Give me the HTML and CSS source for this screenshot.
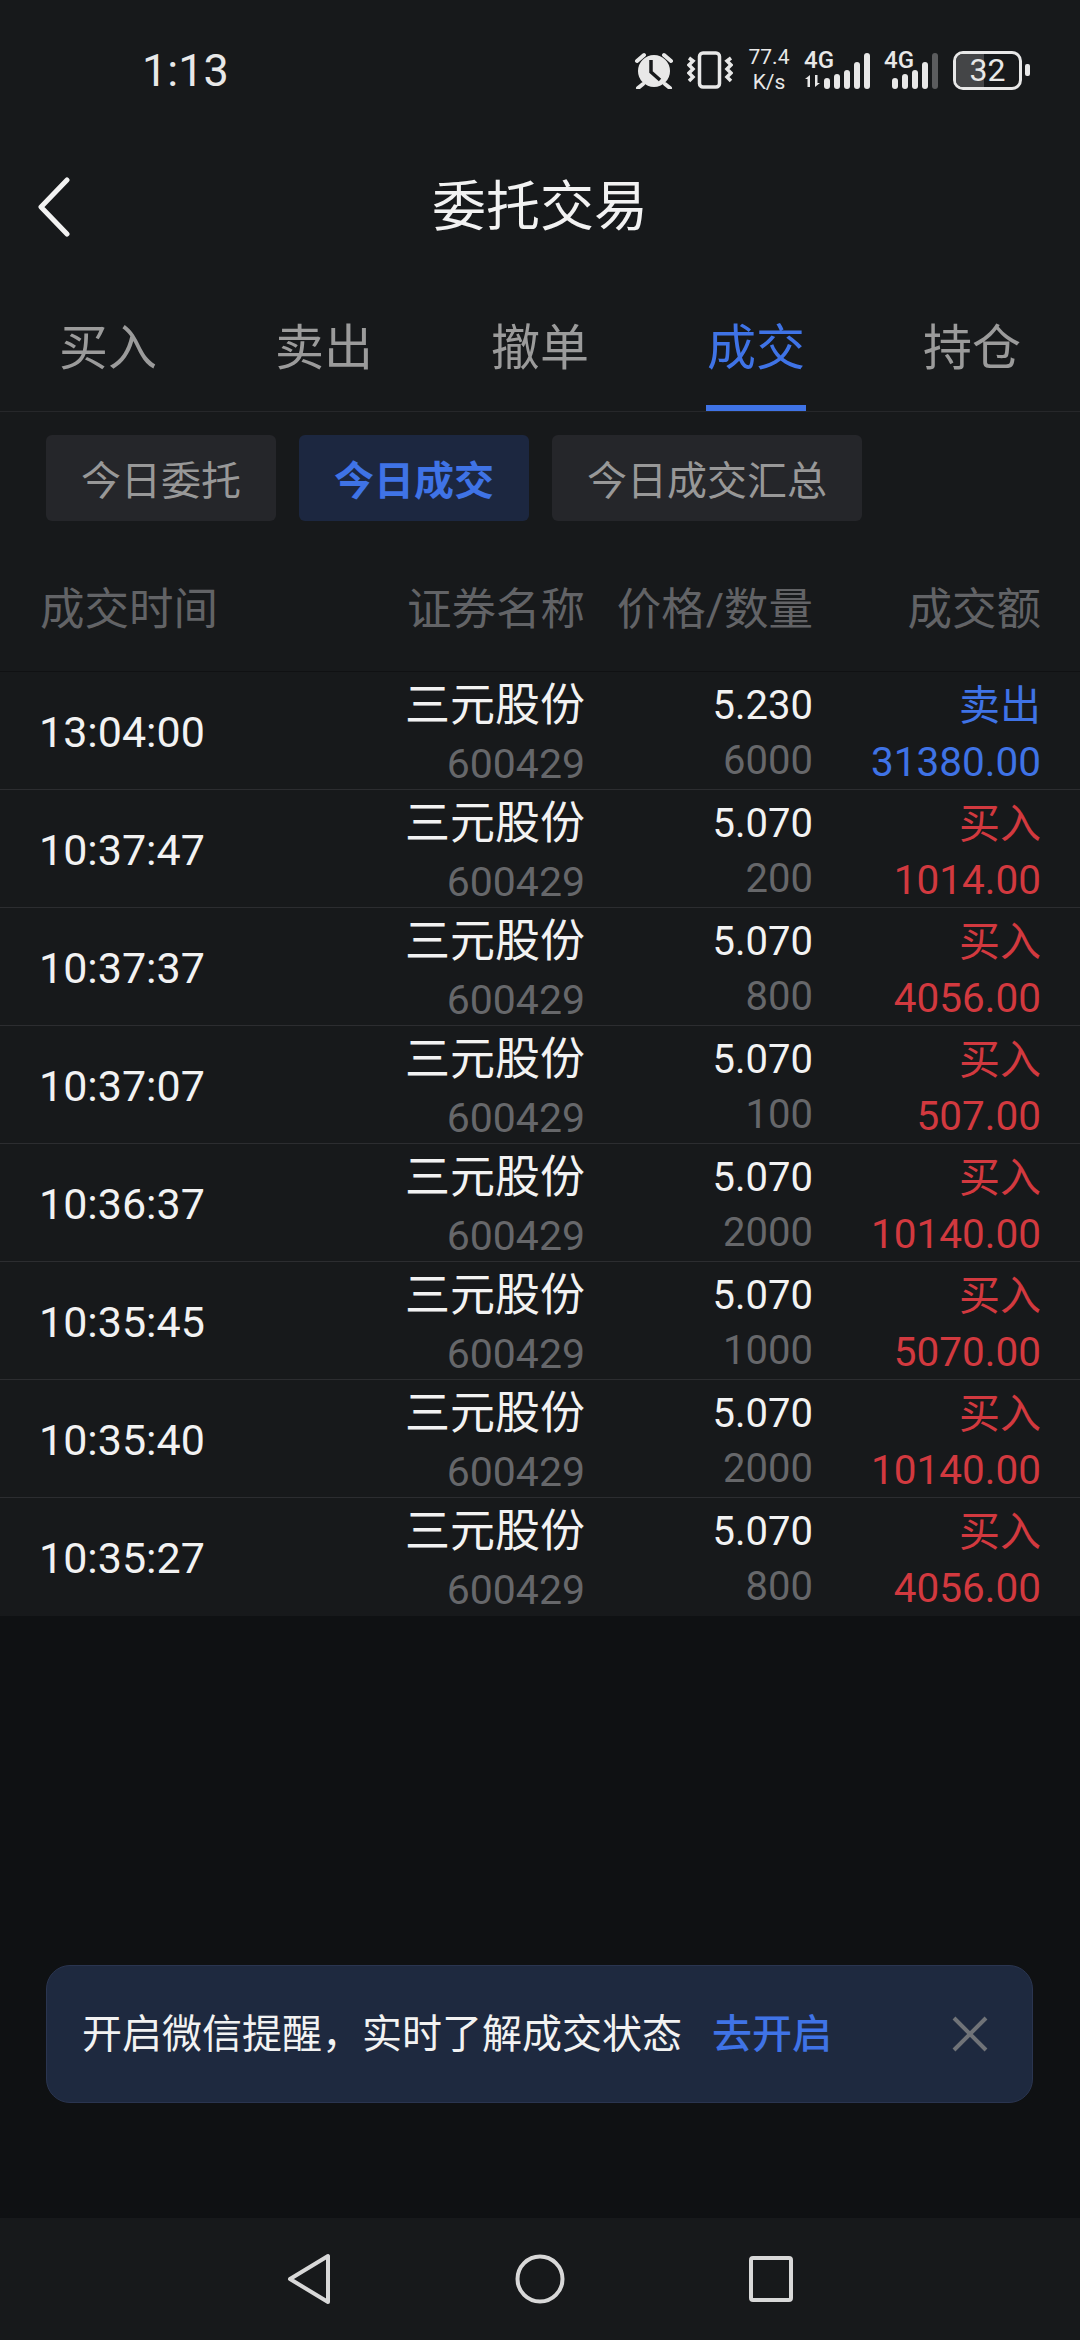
FILE: index.html
```html
<!DOCTYPE html>
<html lang="zh-CN">
  <head>
    <meta charset="UTF-8" />
    <meta name="viewport" content="width=device-width, initial-scale=1.0" />
    <title>委托交易</title>
    <link rel="stylesheet" href="styles.css">
  </head>
  <body>
    <header class="status-bar">
      <span class="clock">1:13</span>
      <div class="status-icons">
        <svg class="icon-alarm" width="40" height="38" viewBox="0 0 40 38" fill="none">
          <circle cx="20" cy="20" r="16" fill="#e8e8e8" />
          <path d="M17 9v12l9 8" stroke="#17191b" stroke-width="3.5" />
          <path d="M3 10l7-6M37 10l-7-6M9 33l-5 4M31 33l5 4" stroke="#e8e8e8" stroke-width="4" stroke-linecap="round" />
        </svg>
        <svg class="icon-vibrate" width="46" height="38" viewBox="0 0 46 38" fill="none" stroke="#e8e8e8">
          <rect x="12.500" y="2" width="20" height="34" rx="3.500" stroke-width="3.500" />
          <path d="M2 7l4 3-4 4 4 4-4 4 4 4-4 4M44 7l-4 3 4 4-4 4 4 4-4 4 4 4" stroke-width="3.500" />
        </svg>
        <div class="net-speed"><span>77.4</span><span>K/s</span></div>
        <div class="signal">
          <div class="signal-type"><span>4G</span></div>
          <svg class="data-arrows" width="18" height="12" viewBox="0 0 18 12" fill="#e8e8e8">
            <path d="M5 0v12H2.500V4H0zM10 0h2.500v8H15l-5 4z" />
          </svg>
          <svg class="bars" width="46" height="36" viewBox="0 0 46 36" fill="#e8e8e8">
            <rect x="0" y="25" width="6" height="11" rx="3" />
            <rect x="10" y="21" width="6" height="15" rx="3" />
            <rect x="20" y="17" width="6" height="19" rx="3" />
            <rect x="30" y="9" width="6" height="27" rx="3" />
            <rect x="40" y="0" width="6" height="36" rx="3" />
          </svg>
        </div>
        <div class="signal signal-low">
          <span class="signal-type">4G</span>
          <svg class="bars" width="46" height="36" viewBox="0 0 46 36" fill="#e8e8e8">
            <rect x="0" y="25" width="6" height="11" rx="3" />
            <rect x="10" y="21" width="6" height="15" rx="3" />
            <rect x="20" y="17" width="6" height="19" rx="3" />
            <rect x="30" y="9" width="6" height="27" rx="3" />
            <rect x="40" y="0" width="6" height="36" rx="3" fill="#5b5c5e" />
          </svg>
        </div>
        <div class="battery">
          <div class="battery-body"><span class="battery-level"></span><span class="battery-text">32</span></div>
          <span class="battery-nub"></span>
        </div>
      </div>
    </header>

    <nav class="title-bar">
      <svg class="back" width="34" height="60" viewBox="0 0 34 60" fill="none">
        <path d="M30 3L4 30l26 27" stroke="#f2f2f2" stroke-width="5" stroke-linecap="round" stroke-linejoin="round" />
      </svg>
      <h1>委托交易</h1>
    </nav>

    <div class="tabs">
      <span class="tab">买入</span>
      <span class="tab">卖出</span>
      <span class="tab">撤单</span>
      <span class="tab active">成交</span>
      <span class="tab">持仓</span>
    </div>

    <div class="chips">
      <span class="chip">今日委托</span>
      <span class="chip active">今日成交</span>
      <span class="chip">今日成交汇总</span>
    </div>

    <div class="table-head">
      <span>成交时间</span>
      <span>证券名称</span>
      <span>价格/数量</span>
      <span>成交额</span>
    </div>

    <section class="trades">
      <div class="trade">
        <div class="time">13:04:00</div>
        <div class="stock"><span>三元股份</span><small>600429</small></div>
        <div class="price"><span>5.230</span><small>6000</small></div>
        <div class="amount sell"><span>卖出</span><b>31380.00</b></div>
      </div>
      <div class="trade">
        <div class="time">10:37:47</div>
        <div class="stock"><span>三元股份</span><small>600429</small></div>
        <div class="price"><span>5.070</span><small>200</small></div>
        <div class="amount buy"><span>买入</span><b>1014.00</b></div>
      </div>
      <div class="trade">
        <div class="time">10:37:37</div>
        <div class="stock"><span>三元股份</span><small>600429</small></div>
        <div class="price"><span>5.070</span><small>800</small></div>
        <div class="amount buy"><span>买入</span><b>4056.00</b></div>
      </div>
      <div class="trade">
        <div class="time">10:37:07</div>
        <div class="stock"><span>三元股份</span><small>600429</small></div>
        <div class="price"><span>5.070</span><small>100</small></div>
        <div class="amount buy"><span>买入</span><b>507.00</b></div>
      </div>
      <div class="trade">
        <div class="time">10:36:37</div>
        <div class="stock"><span>三元股份</span><small>600429</small></div>
        <div class="price"><span>5.070</span><small>2000</small></div>
        <div class="amount buy"><span>买入</span><b>10140.00</b></div>
      </div>
      <div class="trade">
        <div class="time">10:35:45</div>
        <div class="stock"><span>三元股份</span><small>600429</small></div>
        <div class="price"><span>5.070</span><small>1000</small></div>
        <div class="amount buy"><span>买入</span><b>5070.00</b></div>
      </div>
      <div class="trade">
        <div class="time">10:35:40</div>
        <div class="stock"><span>三元股份</span><small>600429</small></div>
        <div class="price"><span>5.070</span><small>2000</small></div>
        <div class="amount buy"><span>买入</span><b>10140.00</b></div>
      </div>
      <div class="trade">
        <div class="time">10:35:27</div>
        <div class="stock"><span>三元股份</span><small>600429</small></div>
        <div class="price"><span>5.070</span><small>800</small></div>
        <div class="amount buy"><span>买入</span><b>4056.00</b></div>
      </div>
    </section>

    <div class="notice-area">
      <div class="notice">
        <span class="notice-text">开启微信提醒，实时了解成交状态</span>
        <a class="notice-link">去开启</a>
        <svg class="notice-close" width="36" height="36" viewBox="0 0 36 36" fill="none">
          <path d="M2 2l32 32M34 2L2 34" stroke="#707378" stroke-width="4" />
        </svg>
      </div>
    </div>

    <footer class="nav-bar">
      <svg width="44" height="52" viewBox="0 0 44 52" fill="none">
        <path d="M41 3v46L3 26z" stroke="#d8d8d8" stroke-width="4" stroke-linejoin="round" />
      </svg>
      <svg width="50" height="50" viewBox="0 0 50 50" fill="none">
        <circle cx="25" cy="25" r="22.500" stroke="#d8d8d8" stroke-width="4" />
      </svg>
      <svg width="44" height="46" viewBox="0 0 44 46" fill="none">
        <rect x="2" y="2" width="40" height="42" rx="2" stroke="#d8d8d8" stroke-width="4" />
      </svg>
    </footer>
  </body>
</html>
```

FILE: styles.css
```css
* {
  box-sizing: border-box;
}
body {
  margin: 0;
  width: 1080px;
  height: 2340px;
  display: flex;
  flex-direction: column;
  overflow: hidden;
  color: #f2f2f2;
  background-color: #0f1113;
  font-family: "Roboto", "Noto Sans CJK SC", sans-serif;
}

/* status bar */
.status-bar {
  height: 140px;
  display: flex;
  align-items: center;
  padding: 0 50px 0 142px;
  background-color: #17191b;
}
.clock {
  font-size: 45px;
  color: #e8e8e8;
}
.status-icons {
  margin-left: auto;
  display: flex;
  align-items: center;
  color: #e8e8e8;
}
.icon-vibrate {
  margin-left: 13px;
}
.net-speed {
  width: 46px;
  margin-left: 13px;
  display: flex;
  flex-direction: column;
  align-items: center;
  font-size: 21px;
  line-height: 25px;
  white-space: nowrap;
}
.signal {
  display: flex;
  align-items: flex-end;
  position: relative;
  margin-left: 12px;
  width: 66px;
  height: 38px;
  justify-content: flex-end;
}
.signal-low {
  margin-left: 14px;
  width: 54px;
}
.signal-type {
  position: absolute;
  left: 0;
  top: -2px;
  font-size: 24px;
  line-height: 22px;
  font-weight: 500;
  white-space: nowrap;
}
.data-arrows {
  position: absolute;
  left: 1px;
  bottom: 2px;
}
.battery {
  margin-left: 15px;
  display: flex;
  align-items: center;
  gap: 3px;
}
.battery-body {
  width: 69px;
  height: 39px;
  border: 3px solid #e8e8e8;
  border-radius: 10px;
  display: flex;
  align-items: center;
  justify-content: center;
  position: relative;
  overflow: hidden;
}
.battery-level {
  position: absolute;
  left: 0;
  top: 0;
  bottom: 0;
  width: 28px;
  background-color: #444547;
}
.battery-text {
  position: relative;
  font-size: 32px;
}
.battery-nub {
  width: 5px;
  height: 12px;
  border-radius: 2px;
  background-color: #e8e8e8;
}

/* title */
.title-bar {
  height: 134px;
  padding-top: 2px;
  position: relative;
  display: flex;
  align-items: center;
  justify-content: center;
  background-color: #17191b;
}
.title-bar h1 {
  margin: 0;
  font-size: 54px;
  font-weight: 400;
  line-height: 130px;
}
.back {
  position: absolute;
  left: 37px;
  top: 37px;
}

/* tabs */
.tabs {
  height: 138px;
  display: flex;
  border-bottom: 1px solid #26272a;
  background-color: #17191b;
}
.tab {
  flex: 1;
  text-align: center;
  padding-top: 43px;
  font-size: 49px;
  line-height: 64px;
  color: #9b9b9b;
  position: relative;
}
.tab.active {
  color: #3f73e6;
}
.tab.active::after {
  content: "";
  position: absolute;
  left: 58px;
  right: 58px;
  bottom: 0;
  height: 6px;
  background-color: #3f73e6;
}

/* chips */
.chips {
  display: flex;
  gap: 23px;
  padding: 23px 46px 0;
  background-color: #17191b;
}
.chip {
  height: 86px;
  padding: 0 35px;
  display: flex;
  align-items: center;
  font-size: 40px;
  color: #989898;
  border-radius: 6px;
  background-color: #25262a;
}
.chip.active {
  font-weight: 700;
  color: #3f73e6;
  background-color: #1c2740;
}

/* trades table */
.table-head,
.trade {
  display: grid;
  grid-template-columns: 240px 305px 228px 228px;
  padding: 0 39px 0 40px;
}
.table-head {
  height: 150px;
  padding-top: 57px;
  font-size: 44.500px;
  line-height: 64px;
  color: #626366;
  text-align: right;
  background-color: #17191b;
  white-space: nowrap;
}
.table-head span:first-child {
  text-align: left;
}
.trades {
  border-top: 1px solid #101113;
  background-color: #17191b;
}
.trade {
  height: 118px;
  align-items: start;
  padding-top: 2px;
  border-bottom: 1px solid #2c2d30;
  text-align: right;
}
.trade:last-child {
  border-bottom: none;
}
.time {
  margin-left: -1px;
  text-align: left;
  font-size: 43px;
  line-height: 60px;
  margin-top: 28px;
}
.stock,
.price,
.amount {
  display: flex;
  flex-direction: column;
}
.stock span {
  font-size: 45px;
  line-height: 64px;
}
.stock small {
  font-size: 41px;
  line-height: 52px;
  color: #66676a;
}
.price span {
  font-size: 40px;
  line-height: 64px;
}
.price small {
  font-size: 40px;
  line-height: 46px;
  color: #66676a;
}
.amount span {
  font-size: 41px;
  line-height: 64px;
}
.amount b {
  font-size: 40.500px;
  font-weight: 400;
  line-height: 48px;
}
.amount.sell {
  color: #3f73e6;
}
.amount.buy {
  color: #d2393f;
}

/* notice */
.notice-area {
  flex: 1;
  display: flex;
  align-items: flex-end;
  padding: 0 47px 115px 46px;
}
.notice {
  width: 100%;
  height: 138px;
  padding: 0 44px 6px 35px;
  display: flex;
  align-items: center;
  font-size: 40px;
  border: 1px solid #2a3550;
  border-radius: 24px;
  background-color: #1e293f;
}
.notice-text {
  white-space: nowrap;
}
.notice-link {
  margin-left: 30px;
  font-weight: 500;
  color: #3f73e6;
}
.notice-close {
  margin-left: auto;
  margin-top: 6px;
}

/* system nav */
.nav-bar {
  height: 122px;
  display: flex;
  align-items: center;
  justify-content: center;
  gap: 184px;
  background-color: #17191b;
}
```
